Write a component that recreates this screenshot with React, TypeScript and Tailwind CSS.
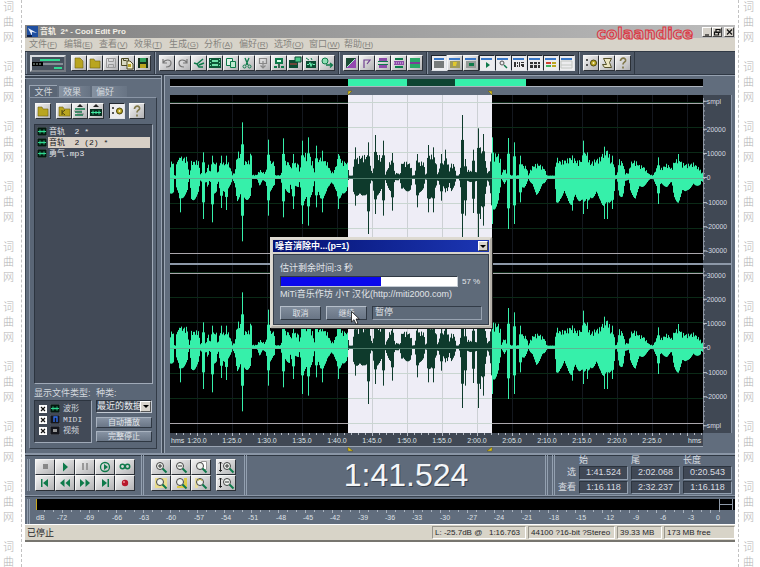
import React from "react";

type Point = [number, number, number];

const CJK = "font-['Liberation_Sans','Noto_Sans_CJK_SC',sans-serif]";

/* Envelope samples: position, height above zero, depth below zero. */
const ENVELOPE: Point[] = [
  [0, 43, 45], [9, 43, 42], [12, 6, 5], [16, 6, 5], [19, 50, 55], [30, 56, 58], [52, 55, 50], [55, 7, 4], [58, 7, 4],
  [62, 44, 62], [86, 46, 60], [88, 10, 10], [95, 12, 14], [108, 14, 14], [112, 45, 35], [118, 15, 12], [130, 43, 45],
  [138, 40, 40], [143, 8, 6], [148, 45, 50], [158, 40, 40], [165, 40, 40], [172, 45, 35], [182, 22, 28], [185, 7, 5],
  [194, 15, 20], [200, 68, 65], [208, 70, 62], [214, 62, 55], [222, 46, 62], [236, 45, 60], [240, 66, 60], [243, 66, 38],
  [246, 7, 4], [260, 7, 4], [268, 22, 25], [276, 14, 12], [286, 15, 15], [292, 45, 45], [312, 44, 32], [315, 6, 4],
  [332, 6, 4], [336, 45, 50], [358, 43, 42], [360, 28, 20], [366, 40, 45], [385, 38, 28], [388, 10, 6], [394, 60, 70],
  [408, 68, 85], [418, 60, 60], [428, 40, 35], [431, 8, 5], [436, 45, 40], [450, 55, 60], [470, 43, 48], [482, 15, 14],
  [490, 15, 20], [500, 45, 50], [505, 65, 90], [515, 45, 45], [530, 43, 40], [534, 30, 10], [537, 5, 5], [546, 5, 5],
  [549, 45, 40], [570, 60, 68], [580, 60, 50], [592, 62, 45], [600, 40, 25], [605, 5, 4], [610, 40, 50], [620, 65, 50],
  [640, 50, 50], [645, 10, 8], [652, 25, 25], [660, 50, 45], [668, 40, 45], [673, 12, 8], [685, 12, 8], [688, 6, 4],
  [694, 43, 45], [712, 42, 38], [722, 35, 35], [725, 6, 4], [732, 6, 4], [738, 45, 45], [750, 42, 40], [760, 43, 40],
  [765, 10, 8], [768, 10, 8], [774, 65, 60], [785, 60, 55], [792, 60, 60], [798, 35, 30], [802, 5, 4], [810, 40, 30],
  [816, 5, 4], [820, 45, 35], [832, 55, 50], [836, 15, 12], [842, 38, 38], [852, 35, 26], [858, 5, 4], [866, 5, 4],
  [872, 40, 40], [882, 20, 15], [898, 20, 15], [905, 15, 12], [920, 15, 12], [925, 75, 90], [940, 70, 80], [946, 40, 40],
  [952, 8, 5], [958, 30, 40], [964, 70, 90], [975, 65, 85], [985, 65, 80], [990, 50, 40], [992, 6, 4], [1002, 28, 18],
  [1010, 8, 5], [1025, 6, 4], [1045, 6, 4], [1049, 45, 45], [1062, 30, 30], [1068, 32, 18], [1074, 6, 4], [1084, 30, 25],
  [1098, 38, 48], [1108, 36, 38], [1122, 25, 20], [1130, 5, 4], [1152, 5, 4], [1158, 55, 75], [1170, 45, 60],
  [1190, 50, 60], [1205, 60, 80], [1220, 45, 70], [1235, 50, 60], [1245, 75, 95], [1260, 40, 55], [1275, 50, 60],
  [1290, 55, 65], [1303, 80, 85], [1315, 70, 90], [1322, 43, 65], [1330, 40, 60], [1335, 8, 6], [1340, 6, 4],
  [1345, 50, 68], [1358, 42, 50], [1364, 12, 10], [1375, 12, 10], [1380, 42, 45], [1395, 47, 58], [1405, 35, 40],
  [1420, 30, 25], [1435, 10, 10], [1448, 5, 4], [1455, 20, 18], [1462, 30, 30], [1472, 25, 25], [1490, 38, 26],
  [1500, 28, 18], [1504, 25, 20], [1510, 43, 60], [1525, 55, 70], [1535, 40, 55], [1550, 36, 35], [1570, 40, 28],
  [1590, 22, 20], [1594, 8, 8], [1599, 30, 25],
];

const SPIKES: Point[] = [
  [30, 58, 105], [100, 75, 125], [125, 65, 135], [152, 65, 92], [169, 65, 98], [216, 165, 192], [293, 113, 115],
  [338, 117, 120], [370, 70, 95], [395, 110, 140], [414, 120, 145], [439, 95, 90], [456, 80, 105], [505, 70, 95],
  [555, 90, 85], [593, 105, 170], [616, 127, 110], [638, 110, 115], [667, 73, 100], [740, 70, 90], [774, 97, 105],
  [790, 90, 105], [812, 70, 70], [824, 83, 45], [876, 187, 182], [886, 55, 115], [908, 83, 107], [925, 147, 182],
  [930, 90, 125], [939, 130, 145], [966, 120, 140], [1013, 118, 155], [1033, 105, 140], [1050, 65, 75], [1205, 60, 100],
  [1240, 110, 110], [1250, 75, 95], [1303, 92, 125], [1312, 80, 125], [1327, 65, 95], [1465, 60, 80], [1525, 70, 75],
];

const SEL_START = 534;
const SEL_END = 966;

function wavePath(from: number, to: number): string {
  let d = "";
  let k = 0;
  for (let x = from; x < to; x += 3) {
    while (k < ENVELOPE.length - 2 && ENVELOPE[k + 1][0] <= x) k++;
    const [x0, u0, d0] = ENVELOPE[k];
    const [x1, u1, d1] = ENVELOPE[k + 1];
    const t = Math.min(1, Math.max(0, (x - x0) / (x1 - x0)));
    const noiseUp = 0.7 + 0.42 * Math.abs(Math.sin(x * 12.9898));
    const noiseDown = 0.68 + 0.44 * Math.abs(Math.sin(x * 7.233 + 2));
    let up = (u0 + (u1 - u0) * t) * noiseUp;
    let down = (d0 + (d1 - d0) * t) * noiseDown;
    for (const s of SPIKES) {
      const gap = Math.abs(s[0] - x);
      if (gap < 2) {
        up = Math.max(up, s[1]);
        down = Math.max(down, s[2]);
      } else if (gap < 5) {
        up = Math.max(up, s[1] * 0.6);
        down = Math.max(down, s[2] * 0.6);
      }
    }
    d += `M${x + 1.5} ${(247 - Math.max(up, 5)).toFixed(1)}V${(247 + Math.max(down, 5)).toFixed(1)}`;
  }
  return d;
}

const WAVE_LEFT = wavePath(0, SEL_START);
const WAVE_SELECTED = wavePath(SEL_START, SEL_END);
const WAVE_RIGHT = wavePath(SEL_END, 1599);
const TIME_TICKS = Array.from({ length: 15 }, (_, i) => 27 + i * 35);

function Channel({ label }: { label: string }) {
  return (
    <svg role="img" aria-label={label} viewBox="0 0 1599 504" preserveAspectRatio="none" className="block h-[168px] w-full bg-black">
      <rect x={SEL_START} y="0" width={SEL_END - SEL_START} height="504" fill="#eeedf6" />
      {TIME_TICKS.map((x) => (
        <rect key={x} x={x * 3} y="0" width="3" height="504" fill={x > 178 && x < 322 ? "#ccd0d4" : "#14181f"} />
      ))}
      {[7, 32, 57, 108, 133, 158].map((y) => (
        <g key={y}>
          <rect x="0" y={y * 3} width="1599" height="3" fill="#0b2a17" />
          <rect x={SEL_START} y={y * 3} width={SEL_END - SEL_START} height="3" fill="#c9d6d1" />
        </g>
      ))}
      {[24, 474].map((y) => (
        <g key={y} fill="#aaa6ac">
          <rect x="0" y={y} width={SEL_START} height="3" />
          <rect x={SEL_END} y={y} width="633" height="3" />
        </g>
      ))}
      <g fill="none" strokeWidth="3">
        <path d={WAVE_LEFT} stroke="#36f0aa" />
        <path d={WAVE_SELECTED} stroke="#0e3a2c" />
        <path d={WAVE_RIGHT} stroke="#36f0aa" />
      </g>
      <rect x="0" y="249" width="1599" height="2" fill="#6f9c8a" />
    </svg>
  );
}

function Axis({ marks }: { marks: [number, string][] }) {
  return (
    <svg viewBox="0 0 29 168" className="block h-[168px] w-[29px] shrink-0 border-r border-[#8d98a8] bg-[#404854]">
      {Array.from({ length: 33 }, (_, i) => (
        <rect key={i} x="0" y={3 + i * 5} width="2" height="1" fill="#a9b0ba" />
      ))}
      <rect width="1" height="168" fill="#8f98a5" />
      {marks.map(([y, text]) => (
        <g key={text + y}>
          <rect y={y} width="4" height="1" fill="#c6cbd2" />
          <text x={text[0] === "-" ? 3 : 4} y={y + 3} fontSize="7" fill="#d6dae0" fontFamily="Liberation Sans, sans-serif">{text}</text>
        </g>
      ))}
    </svg>
  );
}

const TIMES = ["1:20.0", "1:25.0", "1:30.0", "1:35.0", "1:40.0", "1:45.0", "1:50.0", "1:55.0", "2:00.0", "2:05.0", "2:10.0", "2:15.0", "2:20.0", "2:25.0"];

function TimeRuler() {
  return (
    <svg viewBox="0 0 533 13" preserveAspectRatio="none" className="block h-[13px] w-full bg-[#404854]">
      {Array.from({ length: 76 }, (_, i) => (
        <rect key={i} x={6 + i * 7} y="0" width="1" height={i % 5 === 3 ? 3 : 2} fill="#b4bac4" />
      ))}
      <g fontSize="7" fill="#dfe3e8" fontFamily="Liberation Sans, sans-serif">
        <text x="1" y="10">hms</text>
        {TIMES.map((t, i) => (
          <text key={t} x={27 + i * 35} y="10" textAnchor="middle">{t}</text>
        ))}
        <text x="518" y="10">hms</text>
      </g>
    </svg>
  );
}

const G = "#0e7a4a";
const Y = "#b9a520";

const ICONS: Record<string, React.ReactNode> = {
  newDoc: <path d="M4 3h5l3 3v7H4z" fill={Y} stroke="#6e6210" strokeWidth=".6" />,
  open: <path d="M3 4h4l1 2h5v7H3z" fill={Y} stroke="#6e6210" strokeWidth=".6" />,
  save: <path d="M3.500 3.500h9v9h-9zM5.500 3.500v3h5v-3M5.500 12.500v-3h5v3" fill="none" stroke="#9a9a9a" />,
  saveAs: <><path d="M2.500 3.500h7v7h-7zM4.500 3.500v2h3" fill="#d8d8c0" stroke="#4d4a25" /><path d="M8 6h3l3 3v5H8z" fill="#f2eec8" stroke="#4d4a25" /><path d="M9 9h3v3H9z" fill={Y} /></>,
  saveAll: <><path d="M3 3h10v10H3z" fill="#16321c" /><path d="M5 3h6v4H5z" fill="#2fa05c" /><path d="M5 9h6v4H5z" fill={Y} /></>,
  undo: <path d="M4 4v4h4M4 8c2-4 8-4 8 0s-3 4-5 4" fill="none" stroke="#777" strokeWidth="1.200" />,
  redo: <path d="M12 4v4H8M12 8C10 4 4 4 4 8s3 4 5 4" fill="none" stroke="#777" strokeWidth="1.200" />,
  trim: <path d="M3 8l3 1 6-5M6 9l2 3 4 0M8 10l5-2" fill="none" stroke={G} strokeWidth="1.500" />,
  film: <><path d="M2 3h12v10H2z" fill="#0d5636" /><path d="M5 5h6v2H5zM5 9h6v2H5zM3 4h1v1H3zM3 7h1v1H3zM3 10h1v1H3zM12 4h1v1h-1zM12 7h1v1h-1zM12 10h1v1h-1z" fill="#6fe0a8" /></>,
  copy: <><path d="M3.500 3.500h6v7h-6z" fill="#dff3e6" stroke={G} /><path d="M7.500 6.500h5v6h-5z" fill="#bfe8cf" stroke={G} /></>,
  cut: <><path d="M6 3l3 7M10 3l-3 7" stroke={G} strokeWidth="1.300" /><circle cx="5.500" cy="11.500" r="1.500" fill="none" stroke={G} /><circle cx="10.500" cy="11.500" r="1.500" fill="none" stroke={G} /></>,
  paste: <path d="M4.500 3.500h7v5h-7zM8 6v7M5.500 10.500L8 13l2.500-2.500" fill="none" stroke="#888" strokeWidth="1.200" />,
  pasteNew: <><path d="M4 3h8v6H4zM3 11h3v2H3zM10 11h3v2h-3z" fill={G} /><path d="M6 5h4v2H6z" fill="#d7ffe9" /><path d="M8 9v4" stroke="#12402c" strokeWidth="1.500" /></>,
  mix: <><path d="M2 5h9v8H2z" fill="#0c4d33" /><path d="M8 2h6v5H8z" fill="#4cc98a" stroke="#0c4d33" /><path d="M3 9h7" stroke="#d04040" /></>,
  wave: <><path d="M3 6h10v7H3z" fill="#0c4d33" /><path d="M4 9.500h2l1-2 1 4 1-3 1 1h2" fill="none" stroke="#6af0b0" /><path d="M3 3l3 2M8 3l1 2" stroke={G} /></>,
  find: <><circle cx="6" cy="6" r="3" fill="#8fe0b5" stroke={G} /><path d="M7 10h6M11 8l2.500 2L11 12.500" stroke={G} strokeWidth="1.300" fill="none" /></>,
  spectral: <><path d="M3 3h10v10H3z" fill="#1c4d35" /><path d="M3 13L13 3v10z" fill="#9448b0" /><path d="M4 12l8-8" stroke="#a8f0cc" /></>,
  flag: <path d="M5 13V5h6L8 9" fill="none" stroke="#704090" strokeWidth="1.200" />,
  bands: <><path d="M4 3h8v3H4zM4 10h8v3H4z" fill="#8c4ca8" /><path d="M3 6h10v1H3zM3 9h10v1H3z" fill={G} /></>,
  bandsMid: <><path d="M4 3h8v2H4zM4 11h8v2H4z" fill={G} /><path d="M3 6h10v4H3z" fill="#8c4ca8" /><path d="M3 8h10" stroke="#e8d0f0" strokeDasharray="1 1" /></>,
  bandsWide: <><path d="M3 3h10v4H3z" fill="#2aa868" /><path d="M3 7h10v2H3z" fill="#7c3c98" /><path d="M3 9h10v4H3z" fill="#2aa868" /></>,
  panel: <><path d="M3 3h10v2H3z" fill="#3a78c8" /><path d="M3 6h10v7H3z" fill="#777b7a" /></>,
  panelGold: <><path d="M2 3h11v2H2z" fill="#3a78c8" /><path d="M3 6h10v7H3z" fill="#9f9a5c" /><path d="M6 7h4l-1 4H6z" fill="#e0c82c" /></>,
  panelGreen: <><path d="M2 3h11v2H2z" fill="#3a78c8" /><path d="M3 6h10v7H3z" fill="#969b98" /><path d="M6 8h5v3H6z" fill={G} /></>,
  panelPlay: <><path d="M2 3h11v2H2z" fill="#3a78c8" /><path d="M7 7l4 3-4 3z" fill={G} /></>,
  panelZoom: <><path d="M2 3h11v2H2z" fill="#3a78c8" /><circle cx="7" cy="8" r="2" fill="none" stroke="#555" /><path d="M9 10l3 3" stroke={G} strokeWidth="1.500" /></>,
  panelTime: <><path d="M2 3h11v2H2z" fill="#3a78c8" /><path d="M3 7h2v5H3zM6 7h1v2H6zM6 10h1v2H6zM8 7h1v5H8zM10 7h3v1h-3zM10 9h3v3h-2v-1h-1z" fill="#333" /></>,
  panelGrid: <><path d="M2 3h11v2H2z" fill="#3a78c8" /><path d="M3 7h3v6H3zM7 7h3v6H7zM11 7h2v6h-2z" fill="#333" /><path d="M3 9.500h10" stroke="#ddd" /></>,
  panelColors: <><path d="M2 3h11v2H2z" fill="#3a78c8" /><path d="M3 7h5v2H3z" fill="#d04030" /><path d="M3 10h5v2H3z" fill="#40b060" /><path d="M9 7h4v2H9zM9 10h4v2H9z" fill={Y} /></>,
  panelEmpty: <><path d="M2 3h11v2H2z" fill="#3a78c8" /><path d="M2 6h11v7H2zM2 10h11" fill="none" stroke="#c2c6c2" /></>,
  gear: <><path d="M3 4l2 2M5 4L3 6M3 9l2 2M5 9l-2 2" stroke="#555" /><circle cx="10.500" cy="8" r="3" fill={Y} stroke="#4c4510" /><circle cx="10.500" cy="8" r="1" fill="#f4f0d0" /></>,
  script: <path d="M4.500 3.500h8l-2 4 2 5h-7l-2-3h4z" fill="#ece6c0" stroke="#56522c" />,
  help: <path d="M5.500 6c0-4 6-3.500 5 0-.5 1.200-2.500 1.500-2.500 3.500M8 11.500v2" fill="none" stroke="#80784a" strokeWidth="1.700" />,
  closeFolder: <><path d="M3 4h4l1 2h6v7H3z" fill={Y} stroke="#6e6210" strokeWidth=".6" /><path d="M6 7v5M9 7l-3 2.500L9 12" stroke="#4d4510" fill="none" /></>,
  insertMulti: <><path d="M8 1L5 4h6z" fill="#222" /><path d="M3 6h10M3 9h7M3 12h8" stroke={G} strokeWidth="1.300" /><path d="M2 8h8M5 11h7" stroke="#555" strokeWidth=".6" /></>,
  insertWave: <><path d="M8 1L5 4h6z" fill="#222" /><path d="M2 6h12v7H2z" fill="#082c1e" /><path d="M3 9.500h10M5 7.500v4M8 8v3M11 7.500v4" stroke="#40e8a0" /></>,
};

function Tool({ icon, label, pressed }: { icon: string; label: string; pressed?: boolean }) {
  return (
    <button
      aria-label={label}
      className={`size-4 shrink-0 border ${pressed ? "border-[#20262e] border-r-[#dfe3e8] border-b-[#dfe3e8] bg-[#ececee]" : "border-[#f6f6f6] border-r-[#2b3037] border-b-[#2b3037] bg-linear-to-br from-[#f4f4f4] to-[#b2b2b4]"}`}
    >
      <svg viewBox="1 1 14 14" className="block size-full">{ICONS[icon]}</svg>
    </button>
  );
}

function ToolGroup({ items, pressed, children }: { items: [string, string][]; pressed?: boolean; children?: React.ReactNode }) {
  return (
    <div className="flex h-[22px] items-center border-r border-[#2f3843] pr-[3px] pl-1 shadow-[inset_1px_0_0_#8793a3]">
      {children}
      {items.map(([icon, label], i) => (
        <Tool key={label} icon={icon} label={label} pressed={pressed && i !== 1 && i !== 2} />
      ))}
    </div>
  );
}

const EDIT_TOOLS: [string, string][] = [["undo", "撤销"], ["redo", "重做"], ["trim", "修剪"], ["film", "多轨"], ["copy", "复制"], ["cut", "剪切"], ["paste", "粘贴"], ["pasteNew", "粘贴为新文件"], ["mix", "混合粘贴"], ["wave", "波形"], ["find", "查找"]];
const VIEW_TOOLS: [string, string][] = [["spectral", "频谱"], ["flag", "标记"], ["bands", "声道"], ["bandsMid", "相位"], ["bandsWide", "统计"]];
const PANEL_TOOLS: [string, string][] = [["panel", "文件面板"], ["panelGold", "提示面板"], ["panelGreen", "播放列表"], ["panelPlay", "走带"], ["panelZoom", "缩放"], ["panelTime", "时间"], ["panelGrid", "选区"], ["panelColors", "电平"], ["panelEmpty", "状态"]];

const MENUS = [["文件", "F"], ["编辑", "E"], ["查看", "V"], ["效果", "T"], ["生成", "G"], ["分析", "A"], ["偏好", "R"], ["选项", "O"], ["窗口", "W"], ["帮助", "H"]];

function SideStrip({ right }: { right?: boolean }) {
  return (
    <aside className={`h-full w-[25px] shrink-0 overflow-hidden ${right ? "pl-[3px]" : "pr-[3px]"}`}>
      <div className={`h-full border-dashed border-[#c2c2c2] text-center font-['Noto_Sans_CJK_SC',sans-serif] text-[11px] leading-3 font-light text-[#b4b4b4] ${right ? "border-l pr-0.5" : "border-r pr-1"}`}>
        {Array.from({ length: 10 }, (_, i) => (
          <div key={i} className="mb-[18px] flex flex-col gap-[3px]">
            <span>词</span>
            <span>曲</span>
            {i < 9 && <span>网</span>}
          </div>
        ))}
      </div>
    </aside>
  );
}

function WaveGlyph({ kind = "wave" }: { kind?: string }) {
  return (
    <svg viewBox="0 0 10 9" className="h-[9px] w-[10px] shrink-0">
      <rect width="10" height="9" fill={kind === "wave" ? "#04180f" : "#15161c"} stroke="#8b95a2" strokeWidth=".6" />
      {kind === "wave" && <path d="M1 4.500h8M3 2.500v4M5 3.500v2M7 2.500v4" stroke="#30d890" />}
      {kind === "midi" && <path d="M4 7V2h3v5" stroke="#3070f0" fill="none" strokeWidth="1.300" />}
      {kind === "video" && <path d="M3 3h4v3H3z" fill="#989898" />}
    </svg>
  );
}

function SideButton({ children }: { children: string }) {
  return (
    <button className="h-[11px] w-full border border-[#a9b3c0] border-r-[#2f3843] border-b-[#2f3843] bg-linear-to-b from-[#8793a3] to-[#6a7686] text-center text-[8px] leading-[9px] text-[#e2e6ea]">{children}</button>
  );
}

function FilePanel() {
  return (
    <section className="flex w-[136px] shrink-0 flex-col border-t border-[#909cab] px-1 pt-[9px] pb-1 shadow-[inset_0_2px_0_#3b4552,inset_0_3px_0_#909cab,inset_1px_0_0_#3b4552]">
      <div role="tablist" className="flex h-3 items-end gap-0.5 text-[9px] leading-[10px] text-[#d3d8de]">
        <button role="tab" aria-selected="true" className="h-3 w-7 border-t border-l border-[#9aa5b4] bg-[#5a6676]">文件</button>
        <button role="tab" className="h-[11px] w-[31px] bg-linear-to-r from-[#8692a1] to-[#687484] pl-1 text-left">效果</button>
        <button role="tab" className="h-[11px] w-[35px] bg-linear-to-r from-[#8692a1] to-[#687484] pl-1 text-left">偏好</button>
      </div>
      <div className="flex flex-1 flex-col border border-[#8b96a6] border-r-[#323b47] border-b-[#323b47] bg-[#5a6676] px-1 pt-[5px] pb-1">
        <div className="mb-[5px] flex h-4 px-px">
          <Tool icon="open" label="打开文件" />
          <div className="ml-[5px] flex">
            <Tool icon="closeFolder" label="关闭文件" />
            <Tool icon="insertMulti" label="插入多轨" />
            <Tool icon="insertWave" label="编辑波形" />
          </div>
          <div className="ml-[5px] flex gap-1">
            <Tool icon="gear" label="高级选项" pressed />
            <Tool icon="help" label="帮助" />
          </div>
        </div>
        <ul className="h-[260px] w-[119px] border border-[#2c343f] border-r-[#a0aab8] border-b-[#a0aab8] bg-[#424a57] px-0.5 pt-px font-['Liberation_Mono','Noto_Sans_CJK_SC',monospace] text-[8px] leading-[11px] text-[#e2e5e9]">
          {["音轨  2 *", "音轨  2 (2) *", "勇气.mp3"].map((name, i) => (
            <li key={name} className="flex items-center gap-px whitespace-pre">
              <WaveGlyph />
              <span className={`h-[11px] flex-1 pl-px ${i === 1 ? "bg-[#d8d0c6] text-[#15171a]" : ""}`}>{name}</span>
            </li>
          ))}
        </ul>
        <div className="mt-1 flex gap-1 text-[9px] leading-[10px] text-[#d3d8de]">
          <div className="w-[58px] shrink-0 whitespace-nowrap">
            <div>显示文件类型:</div>
            <div className="mt-0.5 h-[43px] border border-[#2c343f] border-r-[#a0aab8] border-b-[#a0aab8] bg-[#424a57] px-1 pt-0.5 text-[8px]">
              {[["wave", "波形"], ["midi", "MIDI"], ["video", "视频"]].map(([kind, name]) => (
                <label key={name} className="flex h-[11px] items-center gap-[3px]">
                  <span className="grid size-2 place-items-center bg-white">
                    <input type="checkbox" defaultChecked className="col-start-1 row-start-1 size-2 appearance-none" />
                    <svg viewBox="0 0 8 8" className="pointer-events-none col-start-1 row-start-1 size-2"><path d="M2 2l4 4M6 2L2 6" stroke="#111" strokeWidth="1.200" /></svg>
                  </span>
                  <WaveGlyph kind={kind} />
                  <span className={name === "MIDI" ? "font-['Liberation_Mono',monospace]" : ""}>{name}</span>
                </label>
              ))}
            </div>
          </div>
          <div className="flex w-[56px] flex-col">
            <label htmlFor="kind">种类:</label>
            <div className="mt-0.5 mb-1 grid h-[13px] border border-[#2c343f] border-r-[#c3cad3] border-b-[#c3cad3] bg-[#424a57]">
              <select id="kind" className="col-start-1 row-start-1 w-full appearance-none overflow-hidden text-[9px] leading-[11px] text-[#e8eaee]">
                <option>最近的数据</option>
              </select>
              <span className="pointer-events-none col-start-1 row-start-1 grid w-[11px] place-items-center justify-self-end border border-white border-r-[#555] border-b-[#555] bg-[#d8d4cc]">
                <span className="border-x-[3px] border-t-[3px] border-x-transparent border-t-black" />
              </span>
            </div>
            <div className="flex flex-col gap-[3px]">
              <SideButton>自动播放</SideButton>
              <SideButton>完整停止</SideButton>
            </div>
          </div>
        </div>
      </div>
    </section>
  );
}

function Markers({ up }: { up?: boolean }) {
  return (
    <svg viewBox="0 0 533 6" preserveAspectRatio="none" className="block h-1.5 w-full">
      <path d={up ? "M178 0l5 4h-5zM322 0v4h-5z" : "M178 2h4l-4 4zM318 2h4v4z"} fill="#d8c020" stroke="#5d5310" strokeWidth=".5" />
    </svg>
  );
}

function WaveView() {
  return (
    <section className="min-w-0 flex-1 border-t border-[#96a1b0] pt-[3px] pr-[3px] pl-[5px]">
      <div className="mr-[29px] grid h-2 grid-cols-[178fr_59fr_48fr_71fr_177fr] border-b border-[#aeb5bf] bg-black">
        <span /><span className="bg-[#36f0aa]" /><span className="bg-[#0e4431]" /><span className="bg-[#36f0aa]" />
      </div>
      <div className="mt-0.5 mr-[29px]"><Markers /></div>
      <div className="flex">
        <div className="min-w-0 flex-1"><Channel label="左声道" /></div>
        <Axis marks={[[3, "smpl"], [32, "20000"], [57, "10000"], [82, "0"], [108, "-10000"], [133, "-20000"], [158, "-30000"]]} />
      </div>
      <div className="h-0.5 bg-[#8d98a8]" />
      <div className="flex">
        <div className="min-w-0 flex-1"><Channel label="右声道" /></div>
        <Axis marks={[[7, "30000"], [32, "20000"], [57, "10000"], [82, "0"], [108, "-10000"], [133, "-20000"], [163, "smpl"]]} />
      </div>
      <div className="mr-[29px] border-b border-[#9aa4b2]"><TimeRuler /></div>
      <div className="mr-[29px]"><Markers up /></div>
    </section>
  );
}

const glass = (mark: React.ReactNode) => (
  <>
    <circle cx="9" cy="7" r="3.500" fill="#eef2ee" stroke="#444" />
    <path d="M11.500 9.500l4 4" stroke={G} strokeWidth="2" />
    {mark}
  </>
);

const TRANSPORT: [string, React.ReactNode][] = [
  ["停止", <path d="M8 5h5v5H8z" fill="#888" />],
  ["播放", <path d="M8 3.500l5 4.500-5 4.500z" fill={G} />],
  ["暂停", <path d="M7 4h2v7H7zM11 4h2v7h-2z" fill="#999" />],
  ["播放到结尾", <><circle cx="10" cy="8" r="4.500" fill="none" stroke={G} strokeWidth="1.300" /><path d="M9 5l4 3-4 3z" fill={G} /></>],
  ["循环播放", <><circle cx="7.500" cy="7.500" r="2.200" fill="none" stroke={G} strokeWidth="1.500" /><circle cx="12.500" cy="7.500" r="2.200" fill="none" stroke={G} strokeWidth="1.500" /></>],
  ["转到开头", <path d="M6 4h1.500v8H6zM13 4v8L8 8z" fill={G} />],
  ["倒带", <path d="M9.500 4v8L5 8zM15 4v8l-4.500-4z" fill={G} />],
  ["快进", <path d="M5 4v8l4.500-4zM10.500 4v8L15 8z" fill={G} />],
  ["转到结尾", <path d="M12.500 4H14v8h-1.500zM7 4v8l5-4z" fill={G} />],
  ["录音", <><circle cx="10" cy="8" r="3.200" fill="#b8182c" /><circle cx="9" cy="7" r="1" fill="#f08890" /></>],
];

const ZOOMS: [string, React.ReactNode][] = [
  ["水平放大", glass(<path d="M7 7h4M9 5v4" stroke="#333" />)],
  ["水平缩小", glass(<path d="M7 7h4" stroke="#333" />)],
  ["完全缩小", <><path d="M10.500 2.500h5v8h-5z" fill="#fff" stroke="#999" />{glass(null)}</>],
  ["缩放到选区", <><path d="M4 3h12v10H4z" fill="#e9dc8c" />{glass(null)}</>],
  ["选区左缘", <><path d="M13 3h3v10H6v-2h7z" fill="#dccb48" />{glass(null)}</>],
  ["选区右缘", <><path d="M4 3h3v10H4z" fill="#e6dca0" />{glass(<path d="M6.500 6c1-2 4-2 5 0" stroke={Y} fill="none" />)}</>],
];

const VZOOMS: [string, React.ReactNode][] = [
  ["垂直放大", <><g transform="translate(2 0)">{glass(<path d="M7 7h4M9 5v4" stroke="#333" />)}</g><path d="M4.500 3v9M3 4.500L4.500 3 6 4.500M3 11l1.500 1.500L6 11" fill="none" stroke="#222" /></>],
  ["垂直缩小", <><g transform="translate(2 0)">{glass(<path d="M7 7h4" stroke="#333" />)}</g><path d="M4.500 3v9M3 4.500L4.500 3 6 4.500M3 11l1.500 1.500L6 11" fill="none" stroke="#222" /></>],
];

function WideTool({ label, children }: { label: string; children: React.ReactNode }) {
  return (
    <button aria-label={label} className="h-4 w-5 border border-[#f6f6f6] border-r-[#2b3037] border-b-[#2b3037] bg-linear-to-br from-[#f2f2f2] to-[#b4b4b6]">
      <svg viewBox="1 1 18 14" className="block size-full">{children}</svg>
    </button>
  );
}

const BAR = "w-[3px] self-stretch border-x border-[#93a0b0]";

function Controls() {
  return (
    <section className="flex h-[43px] items-center border-t-2 border-b border-t-[#8a96a6] border-b-[#8a96a6] bg-[#5f6b7b] pl-0.5 shadow-[inset_0_1px_0_#2f3843]">
      <div className="flex items-center gap-[5px]">
        <span className={BAR} />
        <div className="grid grid-cols-5">
          {TRANSPORT.map(([label, art]) => <WideTool key={label} label={label}>{art}</WideTool>)}
        </div>
      </div>
      <div className="flex items-center gap-[5px] self-stretch pl-1.5">
        <span className={BAR} />
        <div className="ml-0.5 grid grid-cols-3">
          {ZOOMS.map(([label, art]) => <WideTool key={label} label={label}>{art}</WideTool>)}
        </div>
        <div className="grid">
          {VZOOMS.map(([label, art]) => <WideTool key={label} label={label}>{art}</WideTool>)}
        </div>
      </div>
      <div className="ml-2 flex flex-1 self-stretch">
        <span className={BAR} />
        <output className="flex-1 self-center pl-5 text-center text-[32px] leading-8 text-[#f4f6f8] [text-shadow:1px_1px_0_#3a4350]">1:41.524</output>
        <span className={BAR} />
      </div>
      <div className="ml-1 flex self-stretch">
        <span className={BAR} />
        <table className="border-separate border-spacing-x-[3px] border-spacing-y-px text-[9px] leading-[11px] text-[#d9dde2]">
          <thead>
            <tr className="h-[9px] text-left leading-[9px]">
              <td className="w-[18px] p-0" />
              <th className="p-0 font-normal">始</th><th className="p-0 font-normal">尾</th><th className="p-0 font-normal">长度</th>
            </tr>
          </thead>
          <tbody>
            {[["选", "1:41.524", "2:02.068", "0:20.543"], ["查看", "1:16.118", "2:32.237", "1:16.118"]].map((row) => (
              <tr key={row[0]}>
                <th className="p-0 text-right font-normal whitespace-nowrap">{row[0]}</th>
                {row.slice(1).map((value, i) => (
                  <td key={i} className="w-[49px] border border-[#2c343f] border-r-[#93a0b0] border-b-[#93a0b0] bg-[#404855] p-0 text-center">{value}</td>
                ))}
              </tr>
            ))}
          </tbody>
        </table>
      </div>
    </section>
  );
}

function LevelMeter() {
  return (
    <section className="border-t border-[#3a4451] bg-[#616d7d] pt-0.5 pl-0.5">
      <div className="flex">
        <span className={`${BAR} mr-1.5`} />
        <div className="min-w-0 flex-1">
          <div className="flex h-[11px] justify-between bg-black">
            <span className="w-px bg-[#c8a820]" />
            <span className="mr-0.5 grid w-[14px] grid-rows-2 border-x border-[#8f9aa8]"><span className="border-b border-[#8f9aa8]" /></span>
          </div>
          <svg viewBox="0 0 699 14" preserveAspectRatio="none" className="block h-[14px] w-full">
            {Array.from({ length: 76 }, (_, i) => <rect key={i} x={i * 9 + 8} y="0" width="1" height={i % 3 === 2 ? 3 : 2} fill="#a9b3bf" />)}
            <g fontSize="7" fill="#dde1e6" fontFamily="Liberation Sans, sans-serif" textAnchor="middle">
              <text x="0" y="10" textAnchor="start">dB</text>
              {Array.from({ length: 25 }, (_, i) => (
                <text key={i} x={26 + Math.round((i * 82) / 3)} y="10">{i === 24 ? "0" : `-${72 - i * 3}`}</text>
              ))}
            </g>
          </svg>
        </div>
      </div>
    </section>
  );
}

function NoiseDialog() {
  return (
    <div role="dialog" aria-label="噪音消除" className="absolute top-[237px] left-[245px] w-[222px] border-2 border-[#dedad2] border-r-[#b5b1a9] border-b-[#b5b1a9] bg-[#d8d4cc] p-px shadow-[1px_1px_0_#222]">
      <header className="flex h-3 items-center justify-between bg-linear-to-r from-[#061272] to-[#1c36b4] pl-0.5 text-[9px] leading-3 font-bold text-white">
        <span>噪音消除中...(p=1)</span>
        <button aria-label="菜单" className="mr-px grid h-[10px] w-[10px] place-items-center border border-white border-r-[#444] border-b-[#444] bg-[#d8d4cc]">
          <span className="border-x-[3px] border-t-[3px] border-x-transparent border-t-black" />
        </button>
      </header>
      <div className="mt-0.5 border border-[#343d49] bg-[#5e6a79] px-[6px] pt-2 pb-1 text-[9px] text-[#e0e4e8]">
        <div className="leading-[11px]">估计剩余时间:3 秒</div>
        <div className="mt-0.5 flex items-center gap-1 leading-[11px]">
          <div className="h-[11px] w-[178px] border border-[#2f3843] border-r-[#c5ccd4] border-b-[#c5ccd4] bg-white">
            <div className="h-full bg-[#0a08ec]" style={{ width: "57%" }} />
          </div>
          <span className="text-[8px] whitespace-nowrap">57 %</span>
        </div>
        <div className="leading-[15px] whitespace-nowrap">MiTi音乐作坊 小T 汉化(http://miti2000.com)</div>
        <div className="mt-1 flex gap-[5px] leading-[11px]">
          {["取消", "继续"].map((t) => (
            <button key={t} className="h-[14px] w-[41px] border border-[#b6bfca] border-r-[#2f3843] border-b-[#2f3843] bg-linear-to-b from-[#808c9b] to-[#697585] text-[8px]">{t}</button>
          ))}
          <div className="h-[14px] flex-1 border border-[#323b47] border-r-[#98a3b1] border-b-[#98a3b1] pl-0.5">暂停</div>
        </div>
      </div>
      <svg viewBox="0 0 9 14" className="absolute top-[72px] left-[79px] h-[14px] w-[9px]">
        <path d="M.5.5v10.500l2.500-2.300 2 4.500 2-.8-2-4.400h3.300z" fill="#fff" stroke="#111" strokeWidth=".8" />
      </svg>
    </div>
  );
}

export default function App() {
  return (
    <div className={`flex h-screen overflow-hidden bg-white ${CJK}`}>
      <SideStrip />
      <main className="relative min-w-0 flex-1 pt-[25px]">
        <header className="flex h-[13px] items-center bg-linear-to-r from-[#828282] to-[#bcbcbc] pr-px pl-0.5">
          <svg viewBox="0 0 11 11" className="mr-0.5 size-[11px]"><rect width="11" height="11" fill="#1f4fa0" /><path d="M1 2l9 5-5-1v4z" fill="#e8eefa" /><path d="M0 9h5v2H0z" fill="#0c1d46" /></svg>
          <h1 className="text-[8px] leading-3 font-bold whitespace-pre text-[#f2eee6]">音轨  2* - Cool Edit Pro</h1>
          <span className="mt-1 mr-[9px] ml-auto text-[16px] leading-4 font-bold text-[#ccaeae] font-['DejaVu_Sans',sans-serif] [-webkit-text-stroke:1px_#dc3440]">colaandice</span>
          {["M2 7h4", "M3 1.500h4v3H3zM1.500 4h4v3h-4z", "M2 1.500l5 5M7 1.500l-5 5"].map((d, i) => (
            <button key={d} aria-label={["最小化", "还原", "关闭"][i]} className={`h-[10px] w-[10px] border border-white border-r-[#444] border-b-[#444] bg-[#d6d2ca] ${i === 2 ? "ml-0.5" : ""}`}>
              <svg viewBox="0 0 8 8" className="block size-full"><path d={d} fill="none" stroke="#111" strokeWidth="1.200" /></svg>
            </button>
          ))}
        </header>
        <nav className="flex h-[13px] bg-[#d7d3c9] pl-1 text-[9px] leading-[13px] whitespace-nowrap text-[#85837e]">
          {MENUS.map(([name, key]) => (
            <button key={name} className="w-[35px] shrink-0 text-left">{name}<span className="text-[8px]">(<u>{key}</u>)</span></button>
          ))}
        </nav>
        <div className="flex h-6 items-center border-y border-y-[#303945] bg-[#4c5664] pl-px">
          <ToolGroup items={[["newDoc", "新建"], ["open", "打开"], ["save", "保存"], ["saveAs", "另存为"], ["saveAll", "全部保存"]]}>
            <button aria-label="切换多轨视图" className="mr-[5px] h-[17px] w-[36px] border-2 border-[#d8dce0] border-r-[#747a82] border-b-[#747a82] bg-[#46505c]">
              <svg viewBox="0 0 32 13" className="block size-full"><path d="M8 2h20v2H8zM22 10h8v2h-8z" fill="#30d890" /><path d="M0 5h11v4H0z" fill="#000" /><path d="M11 7h20" stroke="#c8ccd0" /><path d="M1 7h9" stroke="#9fb4aa" strokeDasharray="2 1" /></svg>
            </button>
          </ToolGroup>
          <ToolGroup items={EDIT_TOOLS} />
          <ToolGroup items={VIEW_TOOLS} />
          <ToolGroup items={PANEL_TOOLS} pressed />
          <ToolGroup items={[["gear", "设置"], ["script", "脚本"], ["help", "帮助"]]} />
        </div>
        <div className="flex bg-[#616d7d]">
          <FilePanel />
          <div className="w-1 border-x border-[#9ba6b4] bg-[#414b58]" />
          <WaveView />
        </div>
        <Controls />
        <LevelMeter />
        <footer className="flex h-[18px] items-center gap-0.5 border-t border-b-2 border-t-white border-b-[#77756f] bg-[#d8d4c8] pl-0.5 text-[9px] leading-3 whitespace-nowrap text-[#26262a]">
          <span className="flex-1">已停止</span>
          {[["w-[94px]", "L: -25.7dB @   1:16.763"], ["w-[87px]", "44100 ?16-bit ?Stereo"], ["w-[45px]", "39.33 MB"], ["w-[71px]", "173 MB free"]].map(([w, text]) => (
            <span key={text} className={`${w} h-[13px] border border-[#98958c] border-r-white border-b-white pl-0.5 text-[8px] whitespace-pre`}>{text}</span>
          ))}
        </footer>
        <NoiseDialog />
      </main>
      <SideStrip right />
    </div>
  );
}
